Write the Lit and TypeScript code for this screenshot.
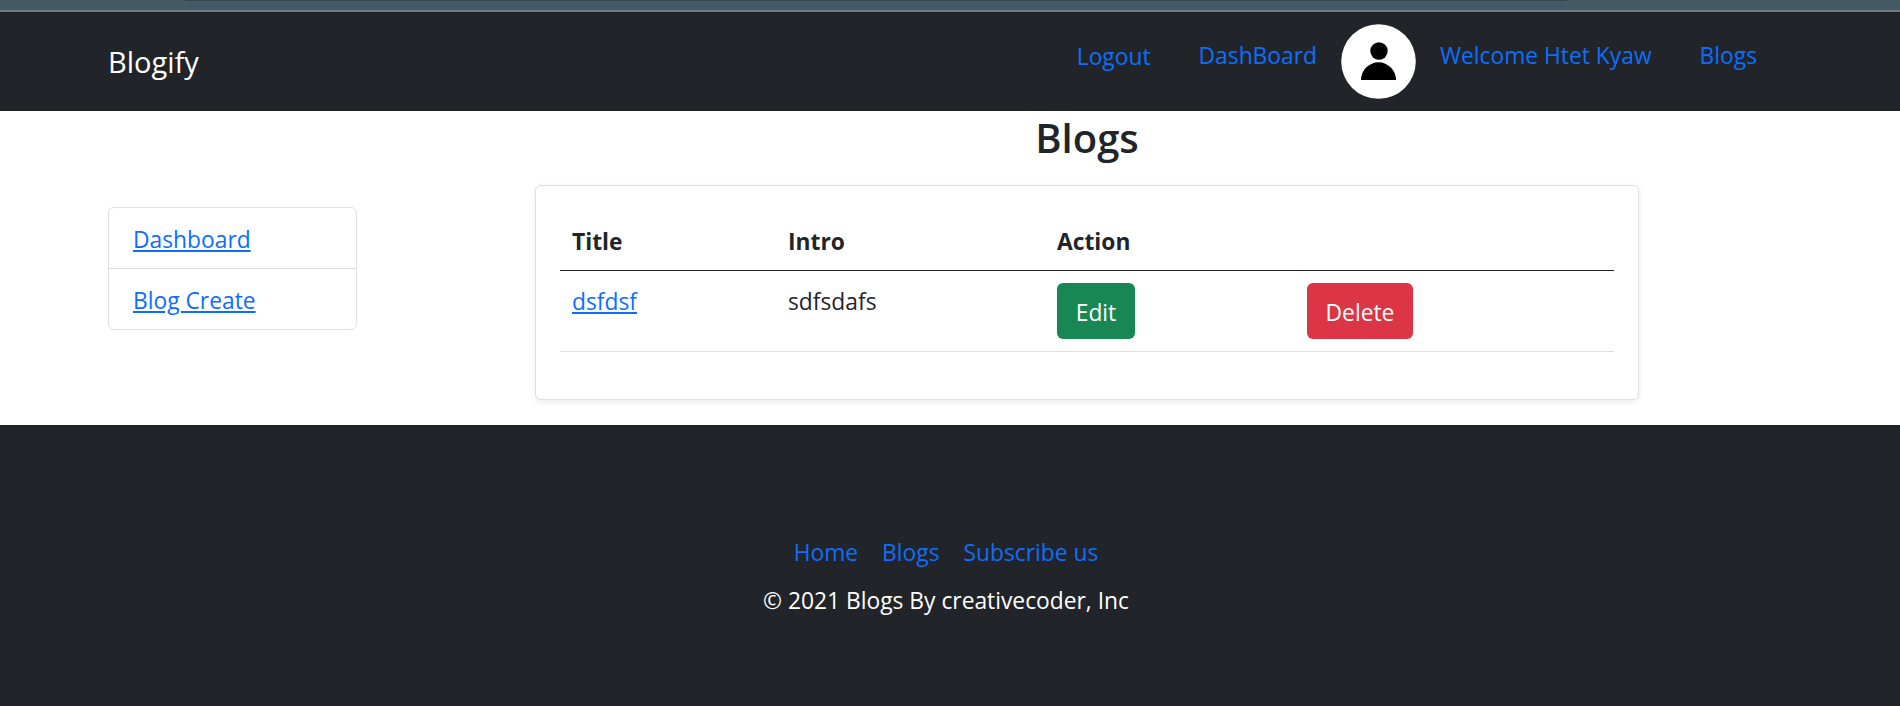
import { LitElement, html, css } from 'lit';
import { customElement } from 'lit/decorators.js';

@customElement('app-root')
export class AppRoot extends LitElement {
  static styles = css`
    :host {
      display: block;
      font-family: 'Open Sans', 'Noto Sans', sans-serif;
      font-size: 22.8px;
      line-height: 36px;
      color: #212529;
      background: #fff;
    }
    a { color: #0d6efd; text-decoration: none; }

    .strip {
      height: 10px;
      background: #455a64;
      border-bottom: 2px solid #6b7d86;
    }
    .strip-shadow {
      height: 1px;
      margin-left: 185px;
      width: 1382px;
      background: #37474f;
    }

    nav {
      display: flex;
      justify-content: space-between;
      align-items: center;
      height: 99px;
      padding: 0 119px 0 108px;
      background: #212529;
    }
    .brand { color: #fff; font-size: 29px; }
    .links { display: flex; align-items: flex-start; }
    .links a { padding: 14px 24px 0; }
    .links a.logout { padding-top: 15px; }
    .avatar {
      display: block;
      width: 75px;
      height: 75px;
    }

    .content {
      display: flex;
      height: 314px;
      padding-left: 108px;
    }
    .side {
      width: 249px;
      height: 123px;
      margin: 96px 178px 0 0;
      border: 1px solid #dfdfdf;
      border-radius: 6px;
      box-sizing: border-box;
    }
    .side a { text-decoration: underline; }
    .side div { padding: 14px 24px 0; height: 60px; box-sizing: border-box; }
    .side div + div { border-top: 1px solid #dfdfdf; height: 61px; }

    .main { width: 1104px; }
    h1 {
      margin: 0;
      height: 74px;
      font-size: 40px;
      line-height: 54px;
      font-weight: 600;
      text-align: center;
    }
    .card {
      height: 215px;
      box-sizing: border-box;
      padding: 24px;
      background: #fff;
      border: 1px solid #dfdfdf;
      border-radius: 6px;
      box-shadow: 0 2px 6px rgba(0, 0, 0, 0.08);
    }
    table {
      width: 1054px;
      border-collapse: separate;
      border-spacing: 0;
      table-layout: fixed;
    }
    th {
      height: 61px;
      box-sizing: border-box;
      padding: 4px 12px 0;
      text-align: left;
      font-weight: 700;
      border-bottom: 1px solid #212529;
    }
    td {
      height: 81px;
      box-sizing: border-box;
      padding: 13px 12px 0;
      vertical-align: top;
      border-bottom: 1px solid #dfdfdf;
    }
    td.act { padding-top: 12px; }
    td a { text-decoration: underline; }
    .c1 { width: 216px; }
    .c2 { width: 269px; }
    .c3 { width: 250px; }

    td a.btn {
      display: block;
      height: 56px;
      padding-top: 12px;
      box-sizing: border-box;
      border-radius: 6px;
      color: #fff;
      text-align: center;
      text-decoration: none;
    }
    td a.edit { background: #198754; width: 78px; }
    td a.del { background: #dc3545; width: 106px; }

    footer {
      height: 281px;
      box-sizing: border-box;
      padding-top: 110px;
      background: #212529;
      color: #fff;
      text-align: center;
    }
    .f-links {
      display: flex;
      justify-content: center;
      gap: 24px;
      padding-right: 8px;
      margin-bottom: 12px;
    }
    .copy { padding-right: 8px; }
  `;

  render() {
    return html`
      <div class="strip"><div class="strip-shadow"></div></div>
      <nav>
        <a class="brand" href="#">Blogify</a>
        <div class="links">
          <a class="logout" href="#">Logout</a>
          <a href="#">DashBoard</a>
          <svg class="avatar" viewBox="0 0 75 75">
            <circle cx="37.5" cy="37.5" r="37.3" fill="#fff"></circle>
            <circle cx="38" cy="27" r="8.7" fill="#000"></circle>
            <path d="M20 56A17.5 17.7 0 0 1 55 56Z" fill="#000"></path>
          </svg>
          <a href="#">Welcome Htet Kyaw</a>
          <a href="#">Blogs</a>
        </div>
      </nav>
      <div class="content">
        <div class="side">
          <div><a href="#">Dashboard</a></div>
          <div><a href="#">Blog Create</a></div>
        </div>
        <div class="main">
          <h1>Blogs</h1>
          <div class="card">
            <table>
              <colgroup>
                <col class="c1" /><col class="c2" /><col class="c3" /><col />
              </colgroup>
              <thead>
                <tr><th>Title</th><th>Intro</th><th>Action</th><th></th></tr>
              </thead>
              <tbody>
                <tr>
                  <td><a href="#">dsfdsf</a></td>
                  <td>sdfsdafs</td>
                  <td class="act"><a class="btn edit" href="#">Edit</a></td>
                  <td class="act"><a class="btn del" href="#">Delete</a></td>
                </tr>
              </tbody>
            </table>
          </div>
        </div>
      </div>
      <footer>
        <div class="f-links">
          <a href="#">Home</a>
          <a href="#">Blogs</a>
          <a href="#">Subscribe us</a>
        </div>
        <div class="copy">© 2021 Blogs By creativecoder, Inc</div>
      </footer>
    `;
  }
}
